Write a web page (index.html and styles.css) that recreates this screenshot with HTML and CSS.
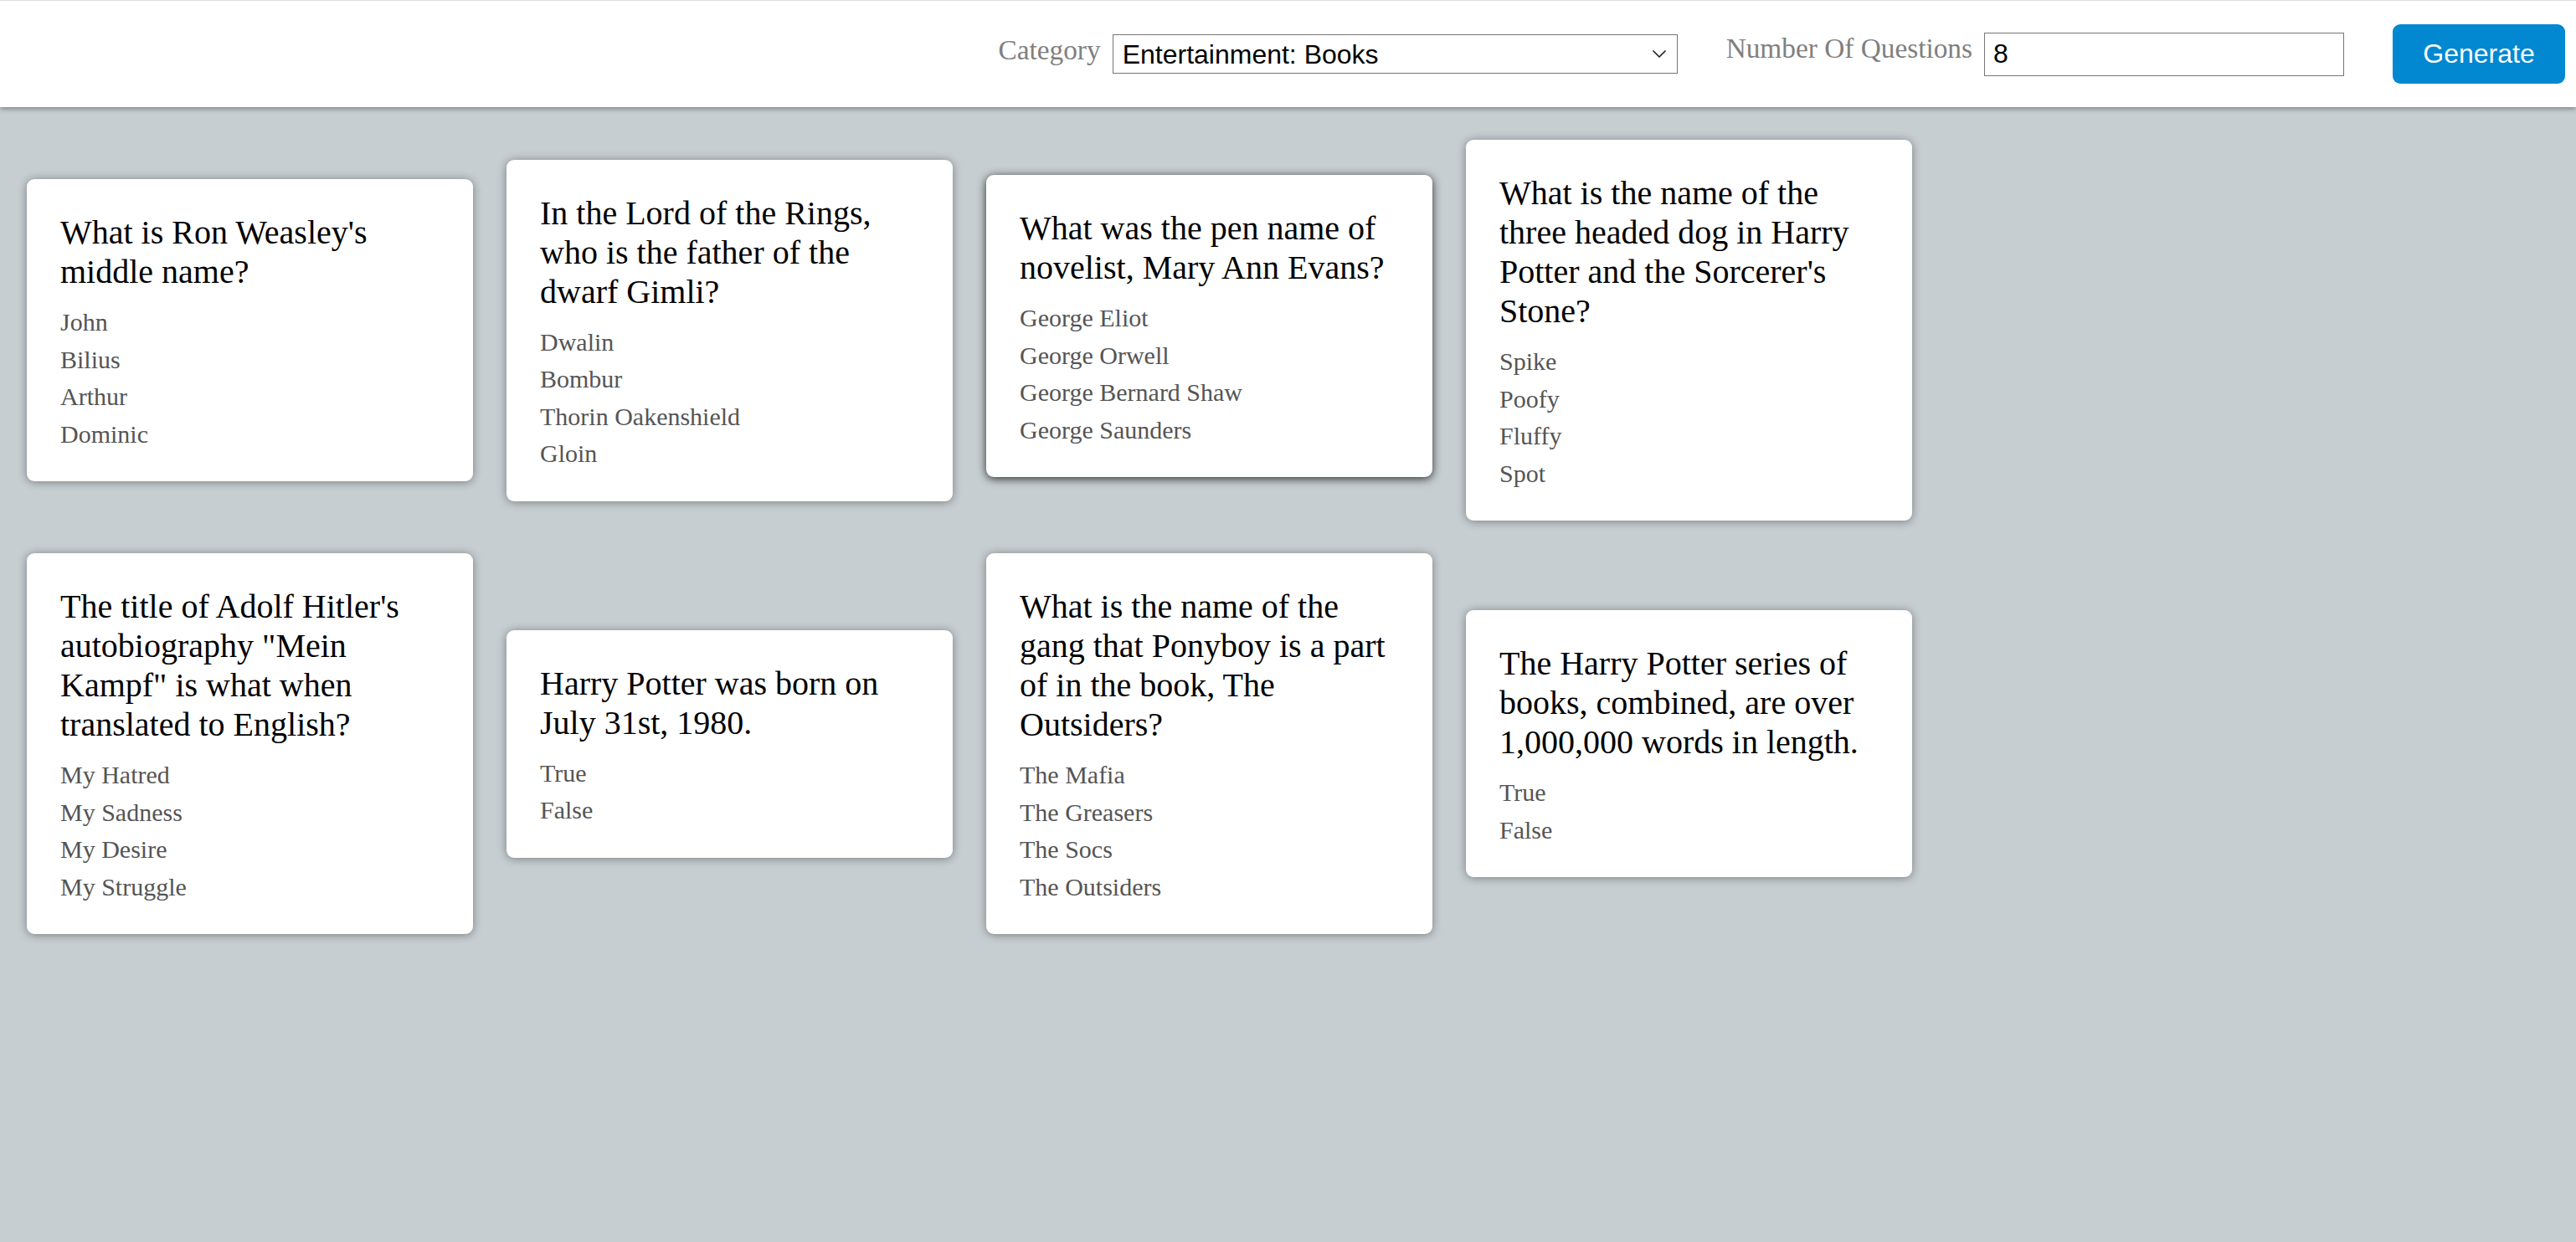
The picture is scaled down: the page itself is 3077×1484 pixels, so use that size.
FILE: index.html
```html
<!DOCTYPE html>
<html lang="en">
<head>
<meta charset="utf-8">
<title>Trivia Generator</title>
<link rel="stylesheet" href="styles.css">
</head>
<body>
<header class="topbar">
  <div class="field">
    <label class="field-label" for="category">Category</label>
    <div class="select-wrap">
      <select id="category" class="select">
        <option>Entertainment: Books</option>
      </select>
      <svg class="chevron" width="18" height="11" viewBox="0 0 18 11" aria-hidden="true"><path d="M1.5 1.5 L9 9 L16.5 1.5" fill="none" stroke="#111" stroke-width="1.5"/></svg>
    </div>
  </div>
  <div class="field">
    <label class="field-label" for="amount">Number Of Questions</label>
    <input id="amount" class="number-input" type="text" value="8">
  </div>
  <button class="generate" type="button">Generate</button>
</header>

<main class="grid">
  <article class="card">
    <h2 class="question">What is Ron Weasley's middle name?</h2>
    <p class="answer">John</p>
    <p class="answer">Bilius</p>
    <p class="answer">Arthur</p>
    <p class="answer">Dominic</p>
  </article>
  <article class="card">
    <h2 class="question">In the Lord of the Rings, who is the father of the dwarf Gimli?</h2>
    <p class="answer">Dwalin</p>
    <p class="answer">Bombur</p>
    <p class="answer">Thorin Oakenshield</p>
    <p class="answer">Gloin</p>
  </article>
  <article class="card card-hover">
    <h2 class="question">What was the pen name of novelist, Mary Ann Evans?</h2>
    <p class="answer">George Eliot</p>
    <p class="answer">George Orwell</p>
    <p class="answer">George Bernard Shaw</p>
    <p class="answer">George Saunders</p>
  </article>
  <article class="card">
    <h2 class="question">What is the name of the three headed dog in Harry Potter and the Sorcerer's Stone?</h2>
    <p class="answer">Spike</p>
    <p class="answer">Poofy</p>
    <p class="answer">Fluffy</p>
    <p class="answer">Spot</p>
  </article>
  <article class="card">
    <h2 class="question">The title of Adolf Hitler's autobiography "Mein Kampf" is what when translated to English?</h2>
    <p class="answer">My Hatred</p>
    <p class="answer">My Sadness</p>
    <p class="answer">My Desire</p>
    <p class="answer">My Struggle</p>
  </article>
  <article class="card">
    <h2 class="question">Harry Potter was born on July 31st, 1980.</h2>
    <p class="answer">True</p>
    <p class="answer">False</p>
  </article>
  <article class="card">
    <h2 class="question">What is the name of the gang that Ponyboy is a part of in the book, The Outsiders?</h2>
    <p class="answer">The Mafia</p>
    <p class="answer">The Greasers</p>
    <p class="answer">The Socs</p>
    <p class="answer">The Outsiders</p>
  </article>
  <article class="card">
    <h2 class="question">The Harry Potter series of books, combined, are over 1,000,000 words in length.</h2>
    <p class="answer">True</p>
    <p class="answer">False</p>
  </article>
</main>
</body>
</html>
```

FILE: styles.css
```css
* {
  box-sizing: border-box;
}

html {
  background: #c6ced1;
}

html,
body {
  margin: 0;
  padding: 0;
}

body {
  font-family: "Liberation Serif", "Times New Roman", serif;
}

/* ---------- top bar ---------- */
.topbar {
  position: relative;
  z-index: 2;
  height: 128px;
  display: flex;
  align-items: center;
  justify-content: flex-end;
  gap: 58px;
  padding-right: 13px;
  background: #ffffff;
  border-top: 1px solid #dcdfe3;
  box-shadow: 0 2px 6px rgba(0, 0, 0, 0.38);
}

.field {
  display: flex;
  align-items: flex-start;
  gap: 14px;
}

.field-label {
  font-family: "Liberation Serif", "Times New Roman", serif;
  font-size: 33.33px;
  color: #808080;
}

.select-wrap {
  position: relative;
}

.select {
  appearance: none;
  -webkit-appearance: none;
  display: block;
  width: 675px;
  height: 47px;
  padding: 0 40px 0 11px;
  border: 1px solid #767676;
  border-radius: 0;
  background: #ffffff;
  color: #000000;
  font-family: "Liberation Sans", Arial, sans-serif;
  font-size: 32px;
}

.chevron {
  position: absolute;
  right: 13px;
  top: 18px;
}

.number-input {
  display: block;
  width: 430px;
  height: 52px;
  padding: 0 10px;
  border: 1px solid #767676;
  border-radius: 0;
  background: #ffffff;
  color: #000000;
  font-family: "Liberation Sans", Arial, sans-serif;
  font-size: 32px;
}

.generate {
  width: 206px;
  height: 71px;
  border: none;
  border-radius: 9px;
  background: #0288d1;
  color: #ffffff;
  font-family: "Liberation Sans", Arial, sans-serif;
  font-size: 32px;
  cursor: pointer;
}

/* ---------- card grid ---------- */
.grid {
  display: grid;
  grid-template-columns: repeat(4, 533px);
  column-gap: 40px;
  row-gap: 39px;
  align-items: center;
  padding: 39px 32px 40px;
}

.card {
  background: #ffffff;
  border-radius: 9px;
  padding: 40px 40px 34px;
  box-shadow: 0 1px 11px rgba(0, 0, 0, 0.4);
}

.card-hover {
  transform: translateY(-5px);
  box-shadow: 0 2px 11px rgba(0, 0, 0, 0.8);
}

.question {
  margin: 0 0 15px;
  font-size: 40px;
  line-height: 47px;
  font-weight: normal;
  color: #000000;
}

.answer {
  margin: 0;
  font-size: 30px;
  line-height: 44.5px;
  color: #555555;
}
```
